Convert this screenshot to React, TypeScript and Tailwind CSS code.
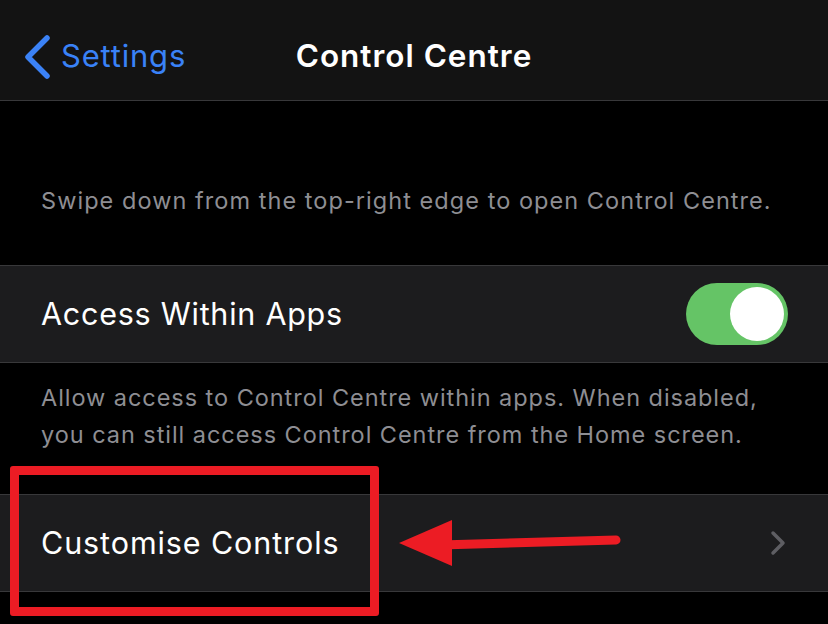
import React from "react";

export default function App() {
  const font = { fontFamily: 'Inter, "Noto Sans", "Liberation Sans", sans-serif' };
  return (
    <div className="relative w-[828px] h-[624px] bg-black overflow-hidden" style={font}>
      {/* Nav bar */}
      <div className="relative h-[101px] bg-[#131313] border-b border-[#38383a] flex items-center pt-[12px]">
        <div className="absolute left-[22px] top-[34px] flex items-center">
          <svg width="32" height="46" viewBox="0 0 32 46">
            <path d="M25 4 L6 23 L25 42" fill="none" stroke="#3b82f6" strokeWidth="5.5" strokeLinecap="round" strokeLinejoin="round" />
          </svg>
        </div>
        <div className="pl-[61px] text-[31px] text-[#3a82f7] tracking-[0.8px]">Settings</div>
        <div className="absolute left-0 right-0 top-[12px] bottom-0 flex items-center justify-center text-[31.5px] font-semibold text-white tracking-[1px]">
          Control Centre
        </div>
      </div>

      {/* Header text */}
      <div className="h-[164px] flex items-end pb-[47px] pl-[41px] text-[23.5px] text-[#8e8e93] tracking-[1.05px] whitespace-nowrap">
        Swipe down from the top-right edge to open Control Centre.
      </div>

      {/* Row 1 */}
      <div className="h-[98px] bg-[#1c1c1e] border-y border-[#38383a] flex items-center justify-between pl-[41px] pr-[40px]">
        <span className="text-[30.5px] text-white tracking-[0.75px]">Access Within Apps</span>
        <div className="w-[102px] h-[62px] rounded-full bg-[#65c466] flex items-center justify-end pr-[4px]">
          <div className="w-[54px] h-[54px] rounded-full bg-white" />
        </div>
      </div>

      {/* Footer text */}
      <div className="h-[131px] pt-[16px] pl-[41px] pr-[20px] text-[23.5px] leading-[37px] text-[#8e8e93] tracking-[0.95px] whitespace-nowrap">
        Allow access to Control Centre within apps. When disabled,<br />you can still access Control Centre from the Home screen.
      </div>

      {/* Row 2 */}
      <div className="h-[98px] bg-[#1c1c1e] border-y border-[#38383a] flex items-center justify-between pl-[41px] pr-[42px]">
        <span className="text-[30.5px] text-white tracking-[0.9px]">Customise Controls</span>
        <svg width="16" height="26" viewBox="0 0 16 26">
          <path d="M3 3 L13 13 L3 23" fill="none" stroke="#5e5e63" strokeWidth="3.5" strokeLinecap="round" strokeLinejoin="round" />
        </svg>
      </div>

      {/* Red annotation box */}
      <div className="absolute left-[10px] top-[466px] w-[369px] h-[150px] border-[9px] border-[#ec1c24] rounded-[3px]" />

      {/* Red arrow */}
      <svg className="absolute left-0 top-0" width="828" height="624" viewBox="0 0 828 624">
        <path d="M440 545 L616 540" stroke="#ec1c24" strokeWidth="9" strokeLinecap="round" />
        <polygon points="399,543 452,520 452,566" fill="#ec1c24" />
      </svg>
    </div>
  );
}
